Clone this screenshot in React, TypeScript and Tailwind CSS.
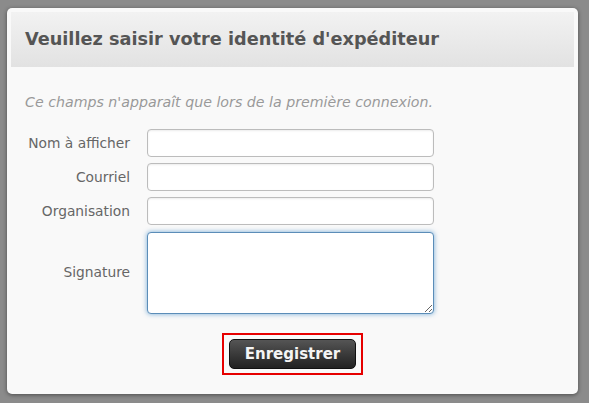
export default function App() {
  const fields = ["Nom à afficher", "Courriel", "Organisation"];

  return (
    <div className="h-[403px] w-[589px] bg-[#8b8b8b] pl-[7px] pt-[8px] font-['DejaVu_Sans',Verdana,sans-serif]">
      <div className="h-[386px] w-[571px] rounded-[5px] bg-[#f9f9f9] p-[4px] shadow-[0_1px_4px_rgba(0,0,0,0.45)]">
        {/* entête */}
        <div className="flex h-[55px] items-center bg-gradient-to-b from-[#f2f2f2] to-[#e2e2e2] pl-[14px]">
          <h1 className="text-[17.7px] font-bold text-[#555]">Veuillez saisir votre identité d'expéditeur</h1>
        </div>

        <p className="mt-[25px] pl-[14px] text-[14.2px] leading-[20px] italic text-[#999]">
          Ce champs n'apparaît que lors de la première connexion.
        </p>

        <div className="mt-[17px] grid grid-cols-[119px_287px] gap-x-[17px] gap-y-[6px]">
          {fields.map((label) => (
            <div key={label} className="contents">
              <label className="flex items-center justify-end text-[13.8px] text-[#666]">{label}</label>
              <input
                type="text"
                className="h-[28px] rounded-[4px] border border-[#bcbcbc] bg-white shadow-[inset_0_1px_2px_rgba(0,0,0,0.08)] outline-none"
              />
            </div>
          ))}
          <label className="flex items-center justify-end text-[13.8px] text-[#666]">Signature</label>
          <textarea className="mt-[1px] h-[82px] resize rounded-[4px] border border-[#5b8db8] bg-white shadow-[0_0_5px_rgba(82,150,205,0.8)] outline-none" />
        </div>

        <div className="mt-[19px] flex justify-center">
          <div className="border-2 border-[#e60000] px-[5px] py-[4px]">
            <button className="h-[30px] w-[127px] rounded-[5px] border border-[#111] bg-gradient-to-b from-[#555] to-[#222] text-[15px] font-bold text-[#f4f4f4]">
              Enregistrer
            </button>
          </div>
        </div>
      </div>
    </div>
  );
}
